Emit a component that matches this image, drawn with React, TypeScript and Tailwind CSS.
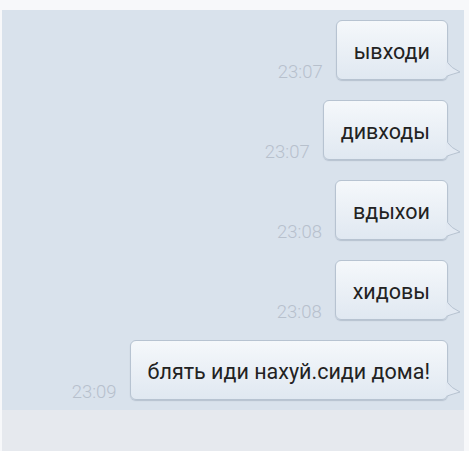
import React from "react";

const msgs = [
  { text: "ывходи", time: "23:07" },
  { text: "дивходы", time: "23:07" },
  { text: "вдыхои", time: "23:08" },
  { text: "хидовы", time: "23:08" },
  { text: "блять иди нахуй.сиди дома!", time: "23:09" },
];

function Bubble({ text }: { text: string }) {
  return (
    <div className="relative h-[60px]">
      <div className="h-full flex items-center pl-[17px] pr-[17px] pt-[5px] rounded-[6px] border border-[#b7c3d1] bg-gradient-to-b from-[#f5f8fb] to-[#e0e8f1] shadow-[0_1px_1px_rgba(120,135,155,0.35)] text-[21.5px] text-[#222222] whitespace-nowrap">
        {text}
      </div>
      <svg
        className="absolute right-[-13px] bottom-[3px]"
        width="15"
        height="16"
        viewBox="0 0 15 16"
      >
        <path
          d="M1 1 Q5 7 14 11 Q7 13 1 15"
          fill="#e2e9f2"
          stroke="#b7c3d1"
          strokeWidth="1"
        />
        <rect x="0" y="1.5" width="1.6" height="13" fill="#e2e9f2" />
      </svg>
    </div>
  );
}

export default function App() {
  return (
    <div
      className="w-[469px] h-[451px] bg-[#f7f8fa] pt-[10px] pl-[2px] pr-[5px] flex flex-col"
      style={{ fontFamily: "Roboto, 'Noto Sans', sans-serif" }}
    >
      <div className="h-[400px] bg-[#d9e2ec] flex flex-col gap-[20px] pt-[10px] pr-[16px]">
        {msgs.map((m, i) => (
          <div key={i} className="flex justify-end items-end">
            <span className="mr-[13px] mb-[-1px] text-[18.5px] font-light leading-none text-[#b7c0cc]">
              {m.time}
            </span>
            <Bubble text={m.text} />
          </div>
        ))}
      </div>
      <div className="h-[41px] bg-[#e6e9ee]" />
    </div>
  );
}
